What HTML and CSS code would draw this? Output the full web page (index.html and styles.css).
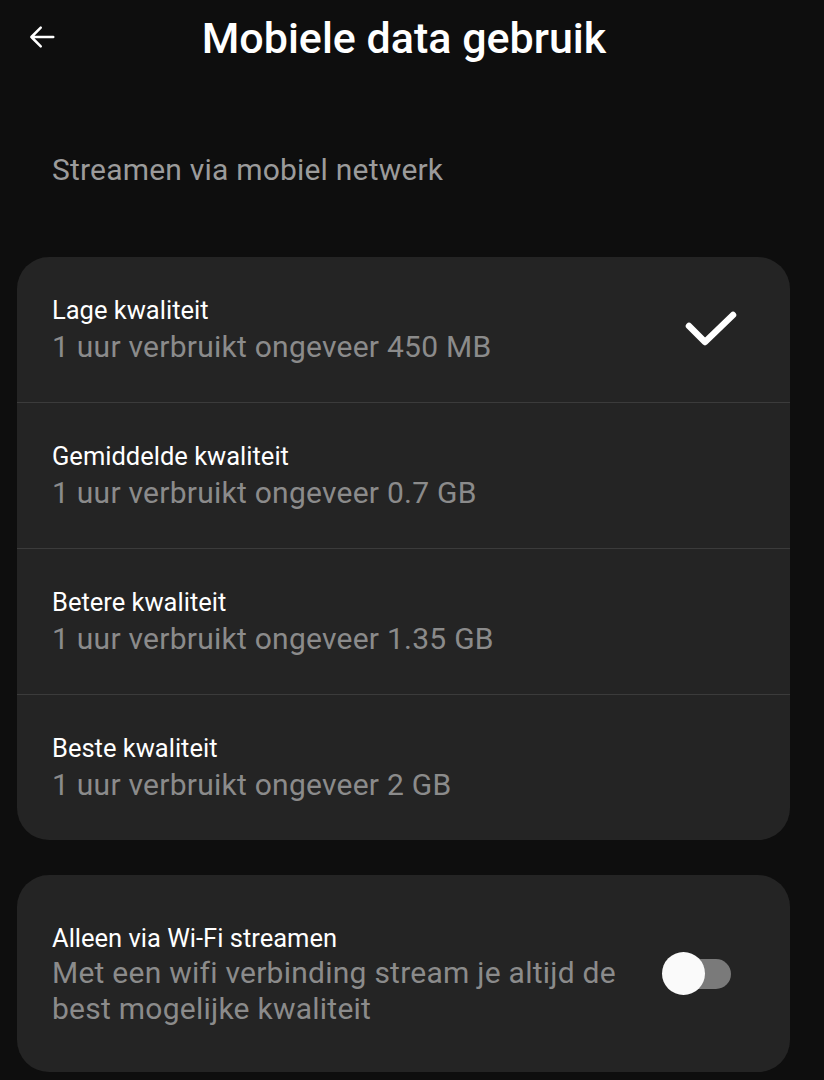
FILE: index.html
```html
<!DOCTYPE html>
<html>
  <head>
    <meta charset="utf-8">
    <title>Mobiele data gebruik</title>
    <link rel="stylesheet" href="styles.css">
  </head>
  <body>
    <div id="md-header">
      <button class="back-btn" aria-label="Terug">
        <svg width="30" height="30" viewBox="0 0 24 24">
          <path d="M21 12H3.5M11 4.5L3.5 12l7.5 7.5" fill="none" stroke="#fff" stroke-width="2" stroke-linecap="round" stroke-linejoin="round"/>
        </svg>
      </button>
      <h1>Mobiele data gebruik</h1>
    </div>
    <p class="section-label">Streamen via mobiel netwerk</p>
    <div class="card">
      <div class="row">
        <div class="row-text">
          <div class="row-title">Lage kwaliteit</div>
          <div class="row-sub">1 uur verbruikt ongeveer 450 MB</div>
        </div>
        <svg class="check" width="56" height="40" viewBox="0 0 56 40">
          <path d="M6 15l16 16L50 4" fill="none" stroke="#fff" stroke-width="6.5" stroke-linecap="round" stroke-linejoin="round"/>
        </svg>
      </div>
      <div class="row">
        <div class="row-text">
          <div class="row-title">Gemiddelde kwaliteit</div>
          <div class="row-sub">1 uur verbruikt ongeveer 0.7 GB</div>
        </div>
      </div>
      <div class="row">
        <div class="row-text">
          <div class="row-title">Betere kwaliteit</div>
          <div class="row-sub">1 uur verbruikt ongeveer 1.35 GB</div>
        </div>
      </div>
      <div class="row">
        <div class="row-text">
          <div class="row-title">Beste kwaliteit</div>
          <div class="row-sub">1 uur verbruikt ongeveer 2 GB</div>
        </div>
      </div>
    </div>
    <div class="card card-wifi">
      <div class="row">
        <div class="row-text">
          <div class="row-title">Alleen via Wi-Fi streamen</div>
          <div class="row-sub">Met een wifi verbinding stream je altijd de best mogelijke kwaliteit</div>
        </div>
        <div class="switch"><span class="thumb"></span></div>
      </div>
    </div>
  </body>
</html>
```

FILE: styles.css
```css
body {
  margin: 0;
  background-color: #0e0e0e;
  font-family: Roboto, "Noto Sans", sans-serif;
  color: #fff;
  width: 824px;
  height: 1080px;
  overflow: hidden;
}
#md-header {
  height: 76px;
  display: flex;
  align-items: center;
  justify-content: center;
  padding-right: 16px;
  position: relative;
}
#md-header h1 {
  margin: 0;
  font-size: 43px;
  font-weight: 500;
}
.back-btn {
  position: absolute;
  left: 27px;
  top: 22px;
  padding: 0;
  border: none;
  background: none;
  display: flex;
}
.section-label {
  margin: 0;
  padding: 76px 0 0 52px;
  height: 36px;
  line-height: 36px;
  font-size: 30px;
  letter-spacing: 0.2px;
  color: #9b9b9b;
}
.card {
  margin: 69px 34px 0 17px;
  background-color: #242424;
  border-radius: 32px;
  overflow: hidden;
}
.row {
  height: 145px;
  display: flex;
  align-items: center;
  padding: 0 51px 0 35px;
  border-top: 1px solid #3b3b3b;
}
.row:first-child {
  border-top: none;
}
.row-text {
  flex: 1;
}
.row-title {
  font-size: 25.5px;
  line-height: 34px;
}
.row-sub {
  font-size: 30px;
  line-height: 40px;
  letter-spacing: 0.25px;
  color: #8b8b8b;
}
.check {
  margin-top: 2px;
}
.card-wifi {
  margin-top: 35px;
}
.card-wifi .row {
  height: 197px;
  padding-right: 59px;
}
.card-wifi .row-text {
  padding-right: 24px;
}
.card-wifi .row-sub {
  line-height: 36px;
}
.switch {
  position: relative;
  width: 68px;
  height: 30px;
  border-radius: 15px;
  background-color: #7a7a7a;
  margin-left: 10px;
}
.thumb {
  position: absolute;
  left: -1px;
  top: -7px;
  width: 43px;
  height: 43px;
  border-radius: 50%;
  background-color: #fafafa;
}
```
